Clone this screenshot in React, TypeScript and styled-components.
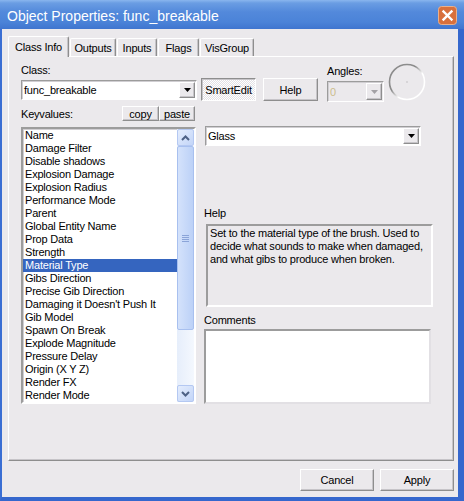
import styled, { createGlobalStyle } from "styled-components";

const GlobalStyle = createGlobalStyle`
  html, body {
    margin: 0;
    padding: 0;
  }
  body {
    width: 464px;
    height: 501px;
    overflow: hidden;
    font-family: "Liberation Sans", Arial, sans-serif;
    font-size: 11px;
    letter-spacing: -0.2px;
    color: #000;
  }
`;

const keyvalues = [
  "Name",
  "Damage Filter",
  "Disable shadows",
  "Explosion Damage",
  "Explosion Radius",
  "Performance Mode",
  "Parent",
  "Global Entity Name",
  "Prop Data",
  "Strength",
  "Material Type",
  "Gibs Direction",
  "Precise Gib Direction",
  "Damaging it Doesn't Push It",
  "Gib Model",
  "Spawn On Break",
  "Explode Magnitude",
  "Pressure Delay",
  "Origin (X Y Z)",
  "Render FX",
  "Render Mode",
];

const tabs = [
  { label: "Class Info", width: 61 },
  { label: "Outputs", width: 46 },
  { label: "Inputs", width: 40 },
  { label: "Flags", width: 41 },
  { label: "VisGroup", width: 54 },
];

function DownArrow({ color = "#000" }: { color?: string }) {
  return (
    <svg width="7" height="4" viewBox="0 0 7 4">
      <polygon points="0,0 7,0 3.5,4" fill={color} />
    </svg>
  );
}

function Chevron({ up }: { up?: boolean }) {
  return (
    <svg width="9" height="6" viewBox="0 0 9 6">
      <polyline
        points={up ? "1,5 4.5,1.5 8,5" : "1,1 4.5,4.5 8,1"}
        fill="none"
        stroke="#4d6185"
        strokeWidth="2"
      />
    </svg>
  );
}

function ComboBox({
  value,
  width,
  height,
  disabled,
}: {
  value: string;
  width: number;
  height: number;
  disabled?: boolean;
}) {
  return (
    <Combo $width={width} $height={height} $disabled={disabled}>
      <ComboText $disabled={disabled}>{value}</ComboText>
      <DropButton>
        <DownArrow color={disabled ? "#a3a1a5" : "#000"} />
      </DropButton>
    </Combo>
  );
}

export default function App() {
  return (
    <>
      <GlobalStyle />
      <Window>
        <TitleBar>
          <TitleText>Object Properties: func_breakable</TitleText>
          <svg width="19" height="19" viewBox="0 0 19 19">
            <rect x="0.5" y="0.5" width="18" height="18" rx="3" fill="#d8703c" stroke="#eab08a" />
            <path
              d="M5.5 5.5 L13.5 13.5 M13.5 5.5 L5.5 13.5"
              stroke="#fff"
              strokeWidth="2.4"
              strokeLinecap="square"
            />
          </svg>
        </TitleBar>

        <Body>
          <TabStrip>
            {tabs.map((t, i) => (
              <Tab key={t.label} $width={t.width} $active={i === 0}>
                {t.label}
              </Tab>
            ))}
          </TabStrip>

          <Panel>
            <TopRow>
              <Field>
                <Label>Class:</Label>
                <ComboBox value="func_breakable" width={176} height={20} />
              </Field>
              <ButtonGroup>
                <PushButton $width={55} $height={23} $pressed>
                  SmartEdit
                </PushButton>
                <PushButton $width={55} $height={23}>
                  Help
                </PushButton>
              </ButtonGroup>
              <AnglesField>
                <Label>Angles:</Label>
                <ComboBox value="0" width={57} height={21} disabled />
              </AnglesField>
              <AngleDial>
                <svg width="38" height="38" viewBox="0 0 38 38">
                  <defs>
                    <linearGradient id="ring" x1="0" y1="0" x2="1" y2="1">
                      <stop offset="0.4" stopColor="#8c8c8c" />
                      <stop offset="0.6" stopColor="#ffffff" />
                    </linearGradient>
                  </defs>
                  <circle cx="19" cy="19" r="17.5" fill="none" stroke="url(#ring)" strokeWidth="1.6" />
                  <rect x="18.5" y="18.5" width="1" height="1" fill="#9a9a9a" />
                </svg>
              </AngleDial>
            </TopRow>

            <KeyRow>
              <KeyLabel>Keyvalues:</KeyLabel>
              <PushButton $width={37} $height={15}>
                copy
              </PushButton>
              <PushButton $width={36} $height={15}>
                paste
              </PushButton>
            </KeyRow>

            <MainRow>
              <ListBox>
                <ListItems>
                  {keyvalues.map((k) => (
                    <ListItem key={k} $selected={k === "Material Type"}>
                      {k}
                    </ListItem>
                  ))}
                </ListItems>
                <ScrollBar>
                  <ScrollButton>
                    <Chevron up />
                  </ScrollButton>
                  <ScrollThumb>
                    <Grip />
                  </ScrollThumb>
                  <ScrollTrack />
                  <ScrollButton>
                    <Chevron />
                  </ScrollButton>
                </ScrollBar>
              </ListBox>

              <RightColumn>
                <ValueCombo>
                  <ComboBox value="Glass" width={216} height={20} />
                </ValueCombo>
                <SectionLabel $gap={61}>Help</SectionLabel>
                <HelpBox>
                  Set to the material type of the brush. Used to decide what
                  sounds to make when damaged, and what gibs to produce when
                  broken.
                </HelpBox>
                <SectionLabel $gap={7}>Comments</SectionLabel>
                <CommentsBox />
              </RightColumn>
            </MainRow>
          </Panel>

          <Footer>
            <PushButton $width={74} $height={22}>
              Cancel
            </PushButton>
            <PushButton $width={74} $height={22}>
              Apply
            </PushButton>
          </Footer>
        </Body>
      </Window>
    </>
  );
}

const Window = styled.div`
  width: 464px;
  height: 501px;
  display: flex;
  flex-direction: column;
  background: #3a6ed3;
`;

const TitleBar = styled.div`
  height: 29px;
  flex: none;
  box-sizing: border-box;
  display: flex;
  align-items: center;
  justify-content: space-between;
  padding: 2px 7px 0 7px;
  background: linear-gradient(
    #8ab6ee 0,
    #6a9de3 3px,
    #5389db 12px,
    #4b83d8 22px,
    #3f75cf 29px
  );
`;

const TitleText = styled.span`
  color: #fff;
  font-size: 14px;
  letter-spacing: 0;
`;

const Body = styled.div`
  flex: 1;
  display: flex;
  flex-direction: column;
  background: #ebe9ec;
  border-left: 2px solid #3a6ed3;
  border-right: 6px solid #3567cd;
  border-bottom: 4px solid #3567cd;
  padding: 7px 4px 0 6px;
`;

const TabStrip = styled.div`
  height: 20px;
  display: flex;
  align-items: flex-end;
  gap: 1px;
`;

const Tab = styled.div<{ $active?: boolean; $width: number }>`
  position: relative;
  z-index: ${(p) => (p.$active ? 1 : 0)};
  width: ${(p) => p.$width}px;
  height: ${(p) => (p.$active ? 21 : 18)}px;
  margin-bottom: ${(p) => (p.$active ? -1 : 0)}px;
  box-sizing: border-box;
  display: flex;
  align-items: center;
  justify-content: center;
  padding-bottom: ${(p) => (p.$active ? 1 : 0)}px;
  background: #ebe9ec;
  border: 1px solid;
  border-bottom: none;
  border-color: #fff #8e8e8e #8e8e8e #fff;
  border-radius: 2px 2px 0 0;
  box-shadow: inset -1px 0 0 #c6c4c8;
  white-space: nowrap;
`;

const Panel = styled.div`
  height: 405px;
  box-sizing: border-box;
  display: flex;
  flex-direction: column;
  padding: 7px 0 0 12px;
  border: 1px solid;
  border-color: #fff #8e8e8e #8e8e8e #fff;
  box-shadow: inset -1px -1px 0 #c6c4c8;
`;

const TopRow = styled.div`
  height: 38px;
  display: flex;
  align-items: flex-start;
`;

const Field = styled.div`
  display: flex;
  flex-direction: column;
  gap: 3px;
`;

const AnglesField = styled(Field)`
  margin: 1px 0 0 9px;
`;

const Label = styled.div`
  height: 13px;
  line-height: 13px;
  white-space: nowrap;
`;

const ButtonGroup = styled.div`
  display: flex;
  gap: 7px;
  margin: 14px 0 0 4px;
`;

const AngleDial = styled.div`
  width: 38px;
  height: 38px;
  margin: -1px 0 0 4px;
`;

const Combo = styled.div<{ $width: number; $height: number; $disabled?: boolean }>`
  width: ${(p) => p.$width}px;
  height: ${(p) => p.$height}px;
  box-sizing: border-box;
  display: flex;
  align-items: stretch;
  padding: 1px;
  background: ${(p) => (p.$disabled ? "#ebe9ec" : "#fff")};
  border: 1px solid;
  border-color: #9c9c9c #fff #fff #9c9c9c;
  box-shadow: inset 1px 1px 0 #d0ced2;
`;

const ComboText = styled.div<{ $disabled?: boolean }>`
  flex: 1;
  display: flex;
  align-items: center;
  padding-left: 1px;
  color: ${(p) => (p.$disabled ? "#cbbd8c" : "#000")};
  white-space: nowrap;
  overflow: hidden;
`;

const DropButton = styled.div`
  width: 16px;
  flex: none;
  box-sizing: border-box;
  display: flex;
  align-items: center;
  justify-content: center;
  background: #ebe9ec;
  border: 1px solid;
  border-color: #fff #8e8e8e #8e8e8e #fff;
  box-shadow: inset -1px -1px 0 #c6c4c8;
`;

const PushButton = styled.button<{ $width: number; $height: number; $pressed?: boolean }>`
  width: ${(p) => p.$width}px;
  height: ${(p) => p.$height}px;
  flex: none;
  box-sizing: border-box;
  padding: 0;
  font: inherit;
  letter-spacing: -0.2px;
  color: #000;
  white-space: nowrap;
  background: ${(p) =>
    p.$pressed
      ? "repeating-conic-gradient(#ffffff 0 25%, #e3e1e5 0 50%) 0 0 / 2px 2px"
      : "#ebe9ec"};
  border: 1px solid;
  border-color: ${(p) =>
    p.$pressed ? "#8e8e8e #fff #fff #8e8e8e" : "#fff #8e8e8e #8e8e8e #fff"};
  box-shadow: ${(p) =>
    p.$pressed ? "inset 1px 1px 0 #c6c4c8" : "inset -1px -1px 0 #c6c4c8"};
`;

const KeyRow = styled.div`
  height: 15px;
  margin-top: 4px;
  display: flex;
  align-items: flex-end;
`;

const KeyLabel = styled(Label)`
  width: 101px;
`;

const MainRow = styled.div`
  margin-top: 6px;
  display: flex;
  align-items: flex-start;
`;

const ListBox = styled.div`
  width: 175px;
  height: 277px;
  box-sizing: border-box;
  display: flex;
  background: #fff;
  border: 2px solid;
  border-color: #9c9c9c #fff #fff #9c9c9c;
  box-shadow: inset 1px 1px 0 #d0ced2;
`;

const ListItems = styled.div`
  flex: 1;
  overflow: hidden;
`;

const ListItem = styled.div<{ $selected?: boolean }>`
  height: 13px;
  line-height: 13px;
  padding-left: 2px;
  white-space: nowrap;
  background: ${(p) => (p.$selected ? "#3565bf" : "transparent")};
  color: ${(p) => (p.$selected ? "#fff" : "#000")};
`;

const ScrollBar = styled.div`
  width: 17px;
  flex: none;
  display: flex;
  flex-direction: column;
  background: linear-gradient(90deg, #e6eefb, #f4f8fe);
`;

const ScrollButton = styled.div`
  height: 17px;
  flex: none;
  box-sizing: border-box;
  display: flex;
  align-items: center;
  justify-content: center;
  background: linear-gradient(135deg, #e4edfd, #c3d5f8);
  border: 1px solid #b4c8f2;
  border-radius: 2px;
`;

const ScrollThumb = styled.div`
  height: 184px;
  flex: none;
  box-sizing: border-box;
  display: flex;
  align-items: center;
  justify-content: center;
  background: linear-gradient(90deg, #d4e2fb, #bcd1f7);
  border: 1px solid #a8c0ef;
  border-radius: 2px;
`;

const Grip = styled.div`
  width: 7px;
  height: 7px;
  background: repeating-linear-gradient(#8ba4d8 0 1px, transparent 1px 2px);
`;

const ScrollTrack = styled.div`
  flex: 1;
`;

const RightColumn = styled.div`
  display: flex;
  flex-direction: column;
  margin: -1px 0 0 8px;
`;

const ValueCombo = styled.div`
  margin-left: 1px;
`;

const SectionLabel = styled(Label)<{ $gap: number }>`
  margin-top: ${(p) => p.$gap}px;
`;

const HelpBox = styled.div`
  width: 227px;
  height: 83px;
  margin: 4px 0 0 2px;
  box-sizing: border-box;
  padding: 1px 2px;
  line-height: 13px;
  border: 2px solid;
  border-color: #9c9c9c #fff #fff #9c9c9c;
  background: #ebe9ec;
`;

const CommentsBox = styled.div`
  width: 227px;
  height: 75px;
  margin-top: 2px;
  box-sizing: border-box;
  background: #fff;
  border: 2px solid;
  border-color: #9c9c9c #e2e0e4 #e2e0e4 #9c9c9c;
`;

const Footer = styled.div`
  margin-top: 8px;
  display: flex;
  justify-content: flex-end;
  gap: 6px;
`;
